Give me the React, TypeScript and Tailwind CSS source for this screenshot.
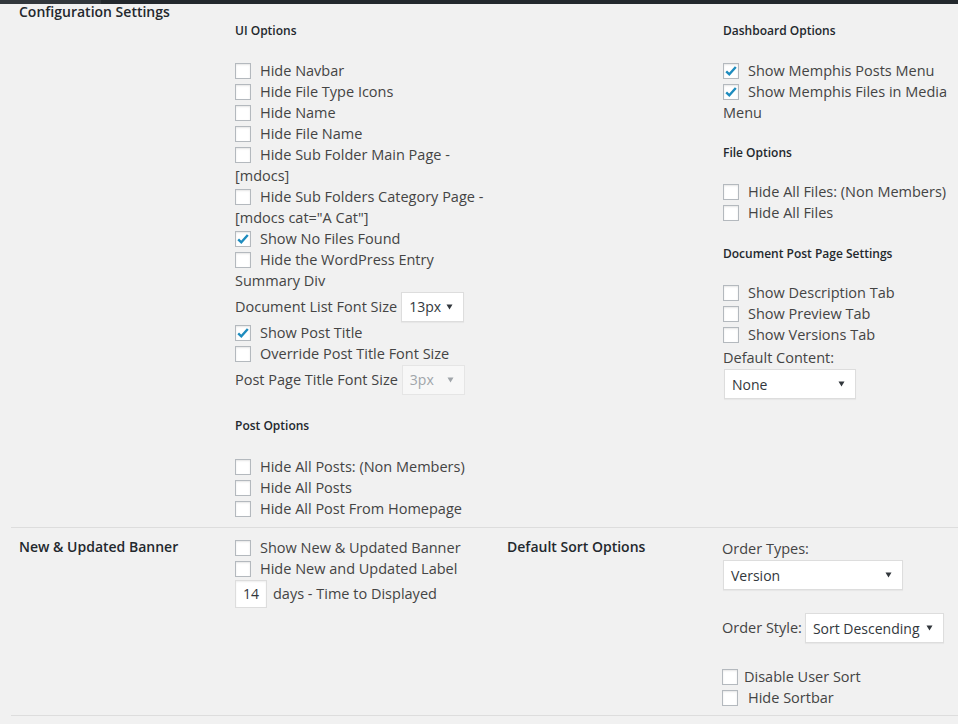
import React from "react";

const Box = ({ checked }: { checked?: boolean }) => (
  <span className="inline-flex shrink-0 w-4 h-4 border border-[#b4b9be] bg-white shadow-[inset_0_1px_2px_rgba(0,0,0,0.1)] items-center justify-center">
    {checked && (
      <svg viewBox="0 0 14 14" className="w-[14px] h-[14px]">
        <path d="M2.2 7.4 L5.3 10.3 L11.8 3" fill="none" stroke="#1e8cbe" strokeWidth="2.4" />
      </svg>
    )}
  </span>
);

const CB = ({ label, checked, gap }: { label: string; checked?: boolean; gap?: string }) => (
  <div className="h-[21px] flex items-center whitespace-nowrap">
    <Box checked={checked} />
    <span className={gap ?? "ml-[9px]"}>{label}</span>
  </div>
);

const Line = ({ children }: { children: React.ReactNode }) => (
  <div className="h-[21px] flex items-center whitespace-nowrap">{children}</div>
);

const Arrow = ({ color }: { color: string }) => (
  <svg viewBox="0 0 8 7" className="w-[7px] h-[6px] shrink-0">
    <polygon points="0.5,0.5 7.5,0.5 4,6.5" fill={color} />
  </svg>
);

const Select = ({ value, cls, disabled }: { value: string; cls: string; disabled?: boolean }) => (
  <div
    className={
      disabled
        ? "h-[30px] flex items-center justify-between pl-[7px] pr-[10px] text-[14px] border border-[#e5e5e5] bg-[#f7f7f7] text-[#a0a5aa] shrink-0 " + cls
        : "h-[30px] flex items-center justify-between pl-[7px] pr-[10px] text-[14px] border border-[#ddd] bg-white text-[#32373c] shadow-[0_1px_1px_rgba(0,0,0,0.04)] shrink-0 " + cls
    }
  >
    <span className="whitespace-nowrap">{value}</span>
    <Arrow color={disabled ? "#a0a5aa" : "#32373c"} />
  </div>
);

const H = ({ children, cls }: { children: React.ReactNode; cls: string }) => (
  <div className={"h-5 leading-5 text-[12px] font-semibold text-[#23282d] whitespace-nowrap " + cls}>{children}</div>
);

export default function App() {
  return (
    <div className="min-h-screen bg-[#f1f1f1] text-[14.5px] text-[#444] font-['Open_Sans',sans-serif]">
      <div className="flex h-[4px]">
        <div className="w-[101px] bg-[#32373c]" />
        <div className="flex-1 bg-[#23282d]" />
      </div>

      {/* Row 1 */}
      <div className="flex ml-[11px] border-b border-[#dddddd]">
        <div className="w-[224px] shrink-0 pl-2 leading-4 text-[14px] font-semibold text-[#23282d] whitespace-nowrap">
          Configuration Settings
        </div>
        <div className="w-[488px] shrink-0 pb-2">
          <H cls="mt-[17px] mb-[19px]">UI Options</H>
          <CB label="Hide Navbar" />
          <CB label="Hide File Type Icons" />
          <CB label="Hide Name" />
          <CB label="Hide File Name" />
          <CB label="Hide Sub Folder Main Page -" />
          <Line>[mdocs]</Line>
          <CB label="Hide Sub Folders Category Page -" />
          <Line>[mdocs cat="A Cat"]</Line>
          <CB label="Show No Files Found" checked />
          <CB label="Hide the WordPress Entry" />
          <Line>Summary Div</Line>
          <div className="h-[31px] flex items-center whitespace-nowrap">
            <span>Document List Font Size</span>
            <Select value="13px" cls="ml-[4px] w-[63px]" />
          </div>
          <CB label="Show Post Title" checked />
          <CB label="Override Post Title Font Size" />
          <div className="h-[31px] flex items-center whitespace-nowrap">
            <span>Post Page Title Font Size</span>
            <Select value="3px" cls="ml-[4px] w-[63px]" disabled />
          </div>
          <H cls="mt-[21px] mb-5">Post Options</H>
          <CB label="Hide All Posts: (Non Members)" />
          <CB label="Hide All Posts" />
          <CB label="Hide All Post From Homepage" />
        </div>
        <div className="w-[235px] shrink-0">
          <H cls="mt-[17px] mb-[19px]">Dashboard Options</H>
          <CB label="Show Memphis Posts Menu" checked />
          <CB label="Show Memphis Files in Media" checked />
          <Line>Menu</Line>
          <H cls="mt-5 mb-[18px]">File Options</H>
          <CB label="Hide All Files: (Non Members)" />
          <CB label="Hide All Files" />
          <H cls="mt-[21px] mb-[18px]">Document Post Page Settings</H>
          <CB label="Show Description Tab" />
          <CB label="Show Preview Tab" />
          <CB label="Show Versions Tab" />
          <div className="h-[24px] flex items-center whitespace-nowrap pt-[2px]">Default Content:</div>
          <Select value="None" cls="ml-px w-[132px]" />
        </div>
      </div>

      {/* Row 2 */}
      <div className="flex ml-[11px] border-b border-[#dddddd]">
        <div className="w-[224px] shrink-0 pl-2 pt-[9px] leading-5 text-[14px] font-semibold text-[#23282d] whitespace-nowrap">
          New &amp; Updated Banner
        </div>
        <div className="w-[272px] shrink-0 pt-[9px]">
          <CB label="Show New & Updated Banner" />
          <CB label="Hide New and Updated Label" />
          <div className="h-[29px] flex items-center whitespace-nowrap">
            <div className="w-[32px] h-[28px] flex items-center justify-center bg-white border border-[#ddd] text-[14px] text-[#32373c] shadow-[inset_0_1px_2px_rgba(0,0,0,0.07)]">
              14
            </div>
            <span className="ml-[6px]">days - Time to Displayed</span>
          </div>
        </div>
        <div className="w-[215px] shrink-0 pt-[9px] leading-5 text-[14px] font-semibold text-[#23282d] whitespace-nowrap">
          Default Sort Options
        </div>
        <div className="flex-1 pt-[11px] pb-[7px]">
          <div className="leading-5 whitespace-nowrap">Order Types:</div>
          <Select value="Version" cls="mt-px ml-px w-[180px]" />
          <div className="mt-[23px] h-[30px] flex items-center whitespace-nowrap">
            <span>Order Style:</span>
            <Select value="Sort Descending" cls="ml-[3px] w-[139px]" />
          </div>
          <div className="mt-[23px]">
            <CB label="Disable User Sort" gap="ml-[6px]" />
            <CB label="Hide Sortbar" gap="ml-[10px]" />
          </div>
        </div>
      </div>
    </div>
  );
}
